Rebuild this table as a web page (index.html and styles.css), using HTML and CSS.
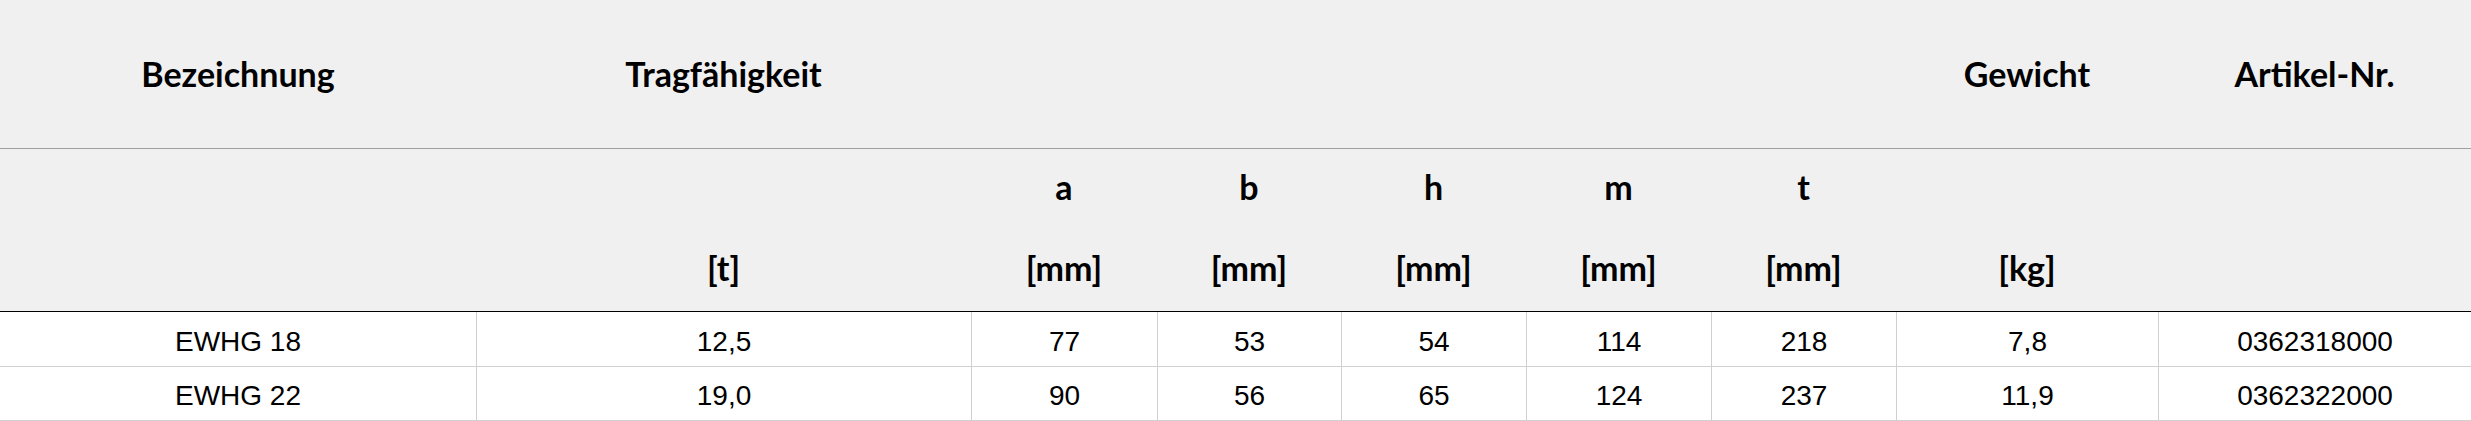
FILE: index.html
```html
<!DOCTYPE html>
<html lang="de">
<head>
<meta charset="utf-8">
<title>EWHG</title>
<link rel="stylesheet" href="styles.css">
</head>
<body>
<div class="table">
  <div class="row head head-1">
    <div class="cell">Bezeichnung</div>
    <div class="cell">Tragfähigkeit</div>
    <div class="cell"></div>
    <div class="cell"></div>
    <div class="cell"></div>
    <div class="cell"></div>
    <div class="cell"></div>
    <div class="cell">Gewicht</div>
    <div class="cell">Artikel-Nr.</div>
  </div>
  <div class="row head head-2">
    <div class="cell"></div>
    <div class="cell"></div>
    <div class="cell">a</div>
    <div class="cell">b</div>
    <div class="cell">h</div>
    <div class="cell">m</div>
    <div class="cell">t</div>
    <div class="cell"></div>
    <div class="cell"></div>
  </div>
  <div class="row head head-3">
    <div class="cell"></div>
    <div class="cell">[t]</div>
    <div class="cell">[mm]</div>
    <div class="cell">[mm]</div>
    <div class="cell">[mm]</div>
    <div class="cell">[mm]</div>
    <div class="cell">[mm]</div>
    <div class="cell">[kg]</div>
    <div class="cell"></div>
  </div>
  <div class="row data">
    <div class="cell">EWHG 18</div>
    <div class="cell">12,5</div>
    <div class="cell">77</div>
    <div class="cell">53</div>
    <div class="cell">54</div>
    <div class="cell">114</div>
    <div class="cell">218</div>
    <div class="cell">7,8</div>
    <div class="cell">0362318000</div>
  </div>
  <div class="row data">
    <div class="cell">EWHG 22</div>
    <div class="cell">19,0</div>
    <div class="cell">90</div>
    <div class="cell">56</div>
    <div class="cell">65</div>
    <div class="cell">124</div>
    <div class="cell">237</div>
    <div class="cell">11,9</div>
    <div class="cell">0362322000</div>
  </div>
</div>
</body>
</html>
```

FILE: styles.css
```css
* {
  box-sizing: border-box;
}

html, body {
  margin: 0;
  padding: 0;
  background: #ffffff;
}

.table {
  width: 2471px;
}

.row {
  display: grid;
  grid-template-columns: 476px 495px 186px 184px 185px 185px 185px 262px 313px;
}

.cell {
  display: flex;
  align-items: center;
  justify-content: center;
  white-space: nowrap;
}

.head {
  background: #f0f0f0;
  color: #000;
  font-family: Lato, "Open Sans", sans-serif;
  font-weight: 700;
  font-size: 34px;
}

.head-1 {
  height: 149px;
  border-bottom: 1px solid #a0a0a0;
}

.head-1 .cell {
  padding-bottom: 2px;
}

.head-2 {
  height: 81px;
}

.head-2 .cell {
  padding-bottom: 7px;
}

.head-3 {
  height: 82px;
  border-bottom: 1px solid #000;
}

.head-3 .cell {
  padding-bottom: 6px;
}

.data {
  background: #fff;
  color: #000;
  font-family: "Liberation Sans", Arial, sans-serif;
  font-size: 28px;
  border-bottom: 1px solid #d0d0d0;
}

.data .cell {
  padding-top: 5px;
}

.data:nth-child(4) {
  height: 55px;
}

.data:nth-child(5) {
  height: 54px;
}

.data .cell + .cell {
  border-left: 1px solid #d0d0d0;
}
```
